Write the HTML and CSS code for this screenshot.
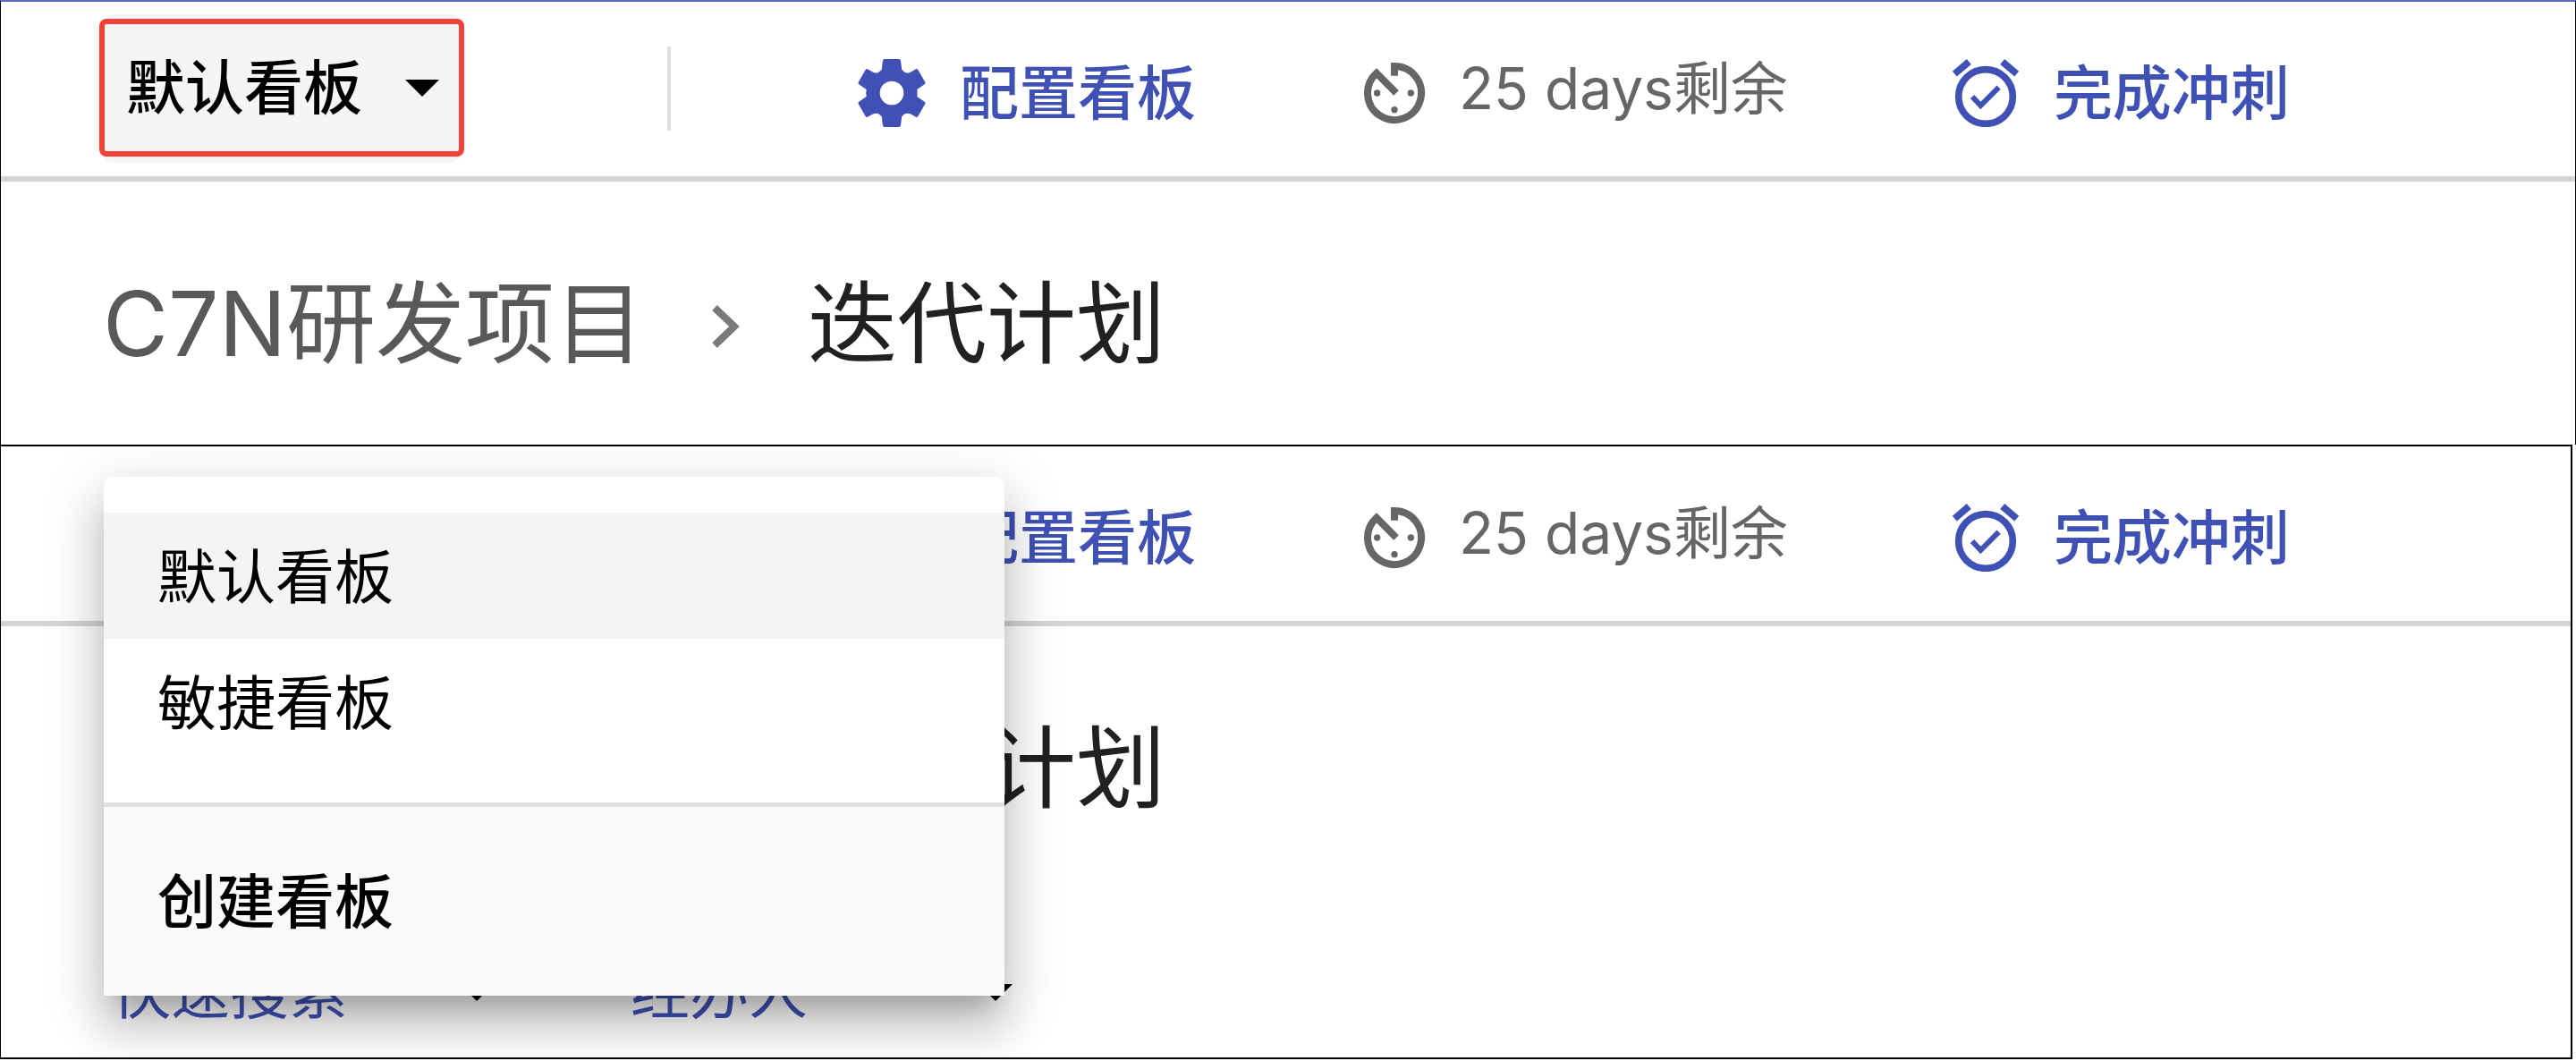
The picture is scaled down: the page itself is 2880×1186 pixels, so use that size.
FILE: index.html
```html
<!DOCTYPE html>
<html lang="zh-CN">
<head>
<meta charset="utf-8">
<title>迭代计划</title>
<link rel="stylesheet" href="styles.css">
</head>
<body>
<svg class="sprite" aria-hidden="true">
  <symbol id="gear" viewBox="57 48 228 228">
    <path fill-rule="evenodd" d="M147 48H195Q200 48 201 54L205 84Q211 89 216 93Q225 97 236 91L252 82Q256 80 259 84L283 126Q285 130 281 133L256 150Q258 162 256 174L281 191Q285 194 283 198L259 240Q256 244 252 242L236 233Q225 228 216 231Q211 235 205 240L201 270Q200 276 195 276H147Q142 276 141 270L137 240Q131 235 126 231Q117 228 106 233L90 242Q86 244 83 240L59 198Q57 194 61 191L86 174Q84 162 86 150L61 133Q57 130 59 126L83 84Q86 80 90 82L106 91Q117 97 126 93Q131 89 137 84L141 54Q142 48 147 48ZM171 122A40 40 0 1 0 171 202A40 40 0 1 0 171 122Z"/>
  </symbol>
  <symbol id="timer" viewBox="64 48 228 228">
    <path fill="none" stroke="currentColor" stroke-width="24" d="M178 104V72A90 90 0 1 1 118 95L184 162"/>
    <circle cx="120" cy="162" r="11"/><circle cx="233" cy="162" r="11"/><circle cx="178" cy="218" r="11"/>
  </symbol>
  <symbol id="alarm" viewBox="72 48 228 228">
    <g fill="none" stroke="currentColor" stroke-width="23">
      <circle cx="186" cy="174" r="91"/>
      <path d="M82 98L130 57M242 57L290 98"/>
      <path stroke-width="18" d="M141 174L169 204L230 143"/>
    </g>
  </symbol>
</svg>

<section class="panel">
  <header class="toolbar">
    <button class="board-select marked" type="button">默认看板<span class="caret"></span></button>
    <span class="divider"></span>
    <a class="action" href="#"><svg class="icon"><use href="#gear"/></svg>配置看板</a>
    <span class="remaining"><svg class="icon"><use href="#timer"/></svg>25 days剩余</span>
    <a class="action" href="#"><svg class="icon"><use href="#alarm"/></svg>完成冲刺</a>
  </header>
  <nav class="crumbs">
    <a class="crumb" href="#">C7N研发项目</a>
    <svg class="chevron" viewBox="0 0 32 50"><path d="M4 4L26 25L4 46"/></svg>
    <span class="crumb-current">迭代计划</span>
  </nav>
</section>

<section class="panel panel-open">
  <header class="toolbar">
    <button class="board-select" type="button">默认看板<span class="caret"></span></button>
    <span class="divider"></span>
    <a class="action" href="#"><svg class="icon"><use href="#gear"/></svg>配置看板</a>
    <span class="remaining"><svg class="icon"><use href="#timer"/></svg>25 days剩余</span>
    <a class="action" href="#"><svg class="icon"><use href="#alarm"/></svg>完成冲刺</a>
  </header>
  <nav class="crumbs">
    <a class="crumb" href="#">C7N研发项目</a>
    <svg class="chevron" viewBox="0 0 32 50"><path d="M4 4L26 25L4 46"/></svg>
    <span class="crumb-current">迭代计划</span>
  </nav>
  <div class="filters">
    <button class="filter" type="button">快速搜索<span class="caret"></span></button>
    <button class="filter" type="button">经办人<span class="caret"></span></button>
  </div>
  <div class="menu">
    <div class="menu-list">
      <button class="menu-item selected" type="button">默认看板</button>
      <button class="menu-item" type="button">敏捷看板</button>
    </div>
    <button class="menu-create" type="button">创建看板</button>
  </div>
</section>
</body>
</html>
```
FILE: styles.css
```css
* {
  box-sizing: border-box;
}

body {
  margin: 0;
  background: #fff;
  color: #000;
  font-family: Inter, "Noto Sans CJK SC", sans-serif;
  font-size: 66px;
  line-height: 80px;
}

button {
  border: 0;
  margin: 0;
  padding: 0;
  background: none;
  color: inherit;
  font: inherit;
  text-align: left;
}

a {
  color: inherit;
  text-decoration: none;
}

.sprite {
  display: none;
}

.panel {
  border: 1px solid #000;
  border-top: 2px solid #5c6bc0;
  border-bottom: 0;
}

.panel-open {
  position: relative;
  overflow: hidden;
  margin-right: 4px;
  border: 2px solid #000;
  border-left-width: 1px;
}

/* the open menu takes the place of the switcher and the project link */
.panel-open .board-select,
.panel-open .crumb {
  visibility: hidden;
}

.toolbar {
  display: flex;
  align-items: center;
  padding: 14px 0 15px 114px;
  border-bottom: 6px solid #d4d4d4;
  white-space: nowrap;
}

.board-select {
  position: relative;
  display: flex;
  align-items: center;
  justify-content: space-between;
  width: 400px;
  padding: 42px 24px 44px 26px;
  border-radius: 12px;
  background: #f5f5f5;
  font-weight: 500;
}

/* highlight frame around the board switcher */
.marked::after {
  content: "";
  position: absolute;
  inset: 5px -4px 7px;
  border: 6px solid #f44336;
  border-radius: 8px;
}

.caret {
  border: 19px solid transparent;
  border-top-color: currentColor;
  border-bottom: 0;
}

.divider {
  width: 4px;
  height: 94px;
  margin: 0 209px 0 231px;
  background: #e0e0e0;
}

.action,
.remaining {
  display: flex;
  align-items: center;
  gap: 38px;
}

.action {
  padding-top: 10px;
  color: #3f51b5;
  font-weight: 500;
}

.remaining {
  gap: 34px;
  margin: 0 183px 0 184px;
  color: #666;
  font-size: 64px;
}

.icon {
  width: 76px;
  height: 76px;
  fill: currentColor;
}

.remaining .icon {
  margin-top: 10px;
}

.crumbs {
  display: flex;
  align-items: center;
  padding: 96px 0 72px 114px;
  font-size: 100px;
  line-height: 126px;
  white-space: nowrap;
}

.crumb {
  color: #595959;
}

.crumb-current {
  color: #212121;
}

.chevron {
  width: 32px;
  height: 50px;
  margin: 6px 76px 0 75px;
  fill: none;
  stroke: #7a7a7a;
  stroke-width: 8px;
}

.filters {
  display: flex;
  gap: 153px;
  padding: 75px 0 33px 124px;
  color: #3f51b5;
}

.filter {
  display: flex;
  align-items: center;
  justify-content: space-between;
  width: 427px;
}

.filter .caret {
  color: #000;
}

.menu {
  position: absolute;
  top: 34px;
  left: 115px;
  width: 1007px;
  border-radius: 10px 10px 0 0;
  background: #fff;
  box-shadow: 0 24px 24px -14px rgba(0, 0, 0, .2), 0 38px 47px 5px rgba(0, 0, 0, .14), 0 14px 66px 9px rgba(0, 0, 0, .12);
}

.menu-list {
  padding: 40px 0 42px;
}

.menu-item,
.menu-create {
  display: block;
  width: 100%;
  padding: 32px 60px 29px;
}

.menu-item.selected {
  background: #f4f4f4;
}

.menu-create {
  padding: 66px 60px 65px;
  border-top: 5px solid #e0e0e0;
  background: #fafafa;
  font-weight: 500;
}
```
